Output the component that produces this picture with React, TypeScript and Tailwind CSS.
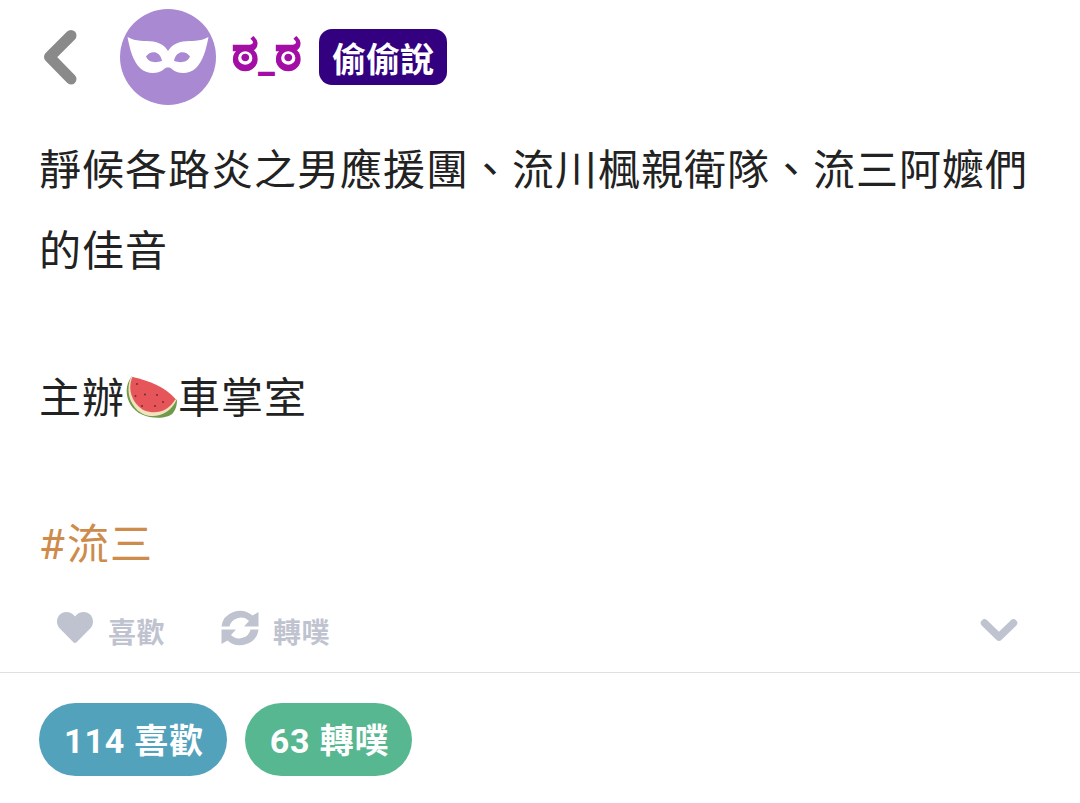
const ARROW = "M221.500 626 A18.500 17.500 0 0 1 252.500 615 L258.500 611.500 V626 H244 L249 620.500 A11.500 11 0 0 0 229.500 626 Z";

const cjk = "font-['Roboto','Noto_Sans_CJK_TC',sans-serif]";

const BackIcon = () => (
  <svg className="h-[56px] w-[34px] shrink-0" viewBox="43 29 34 56" fill="none" stroke="#8a8a8a" strokeWidth="11" strokeLinecap="round" strokeLinejoin="round">
    <path d="M71 35.500 49.500 57 71 79" />
  </svg>
);

const MaskAvatar = () => (
  <div className="ml-[43px] size-24 shrink-0 overflow-hidden rounded-full bg-[#a989d1]">
    <svg className="size-full" viewBox="120 9 96 96">
      <path
        fill="#fff"
        fillRule="evenodd"
        d="M127.500 37 C136 42 145 40.500 153 41.500 C160 42.500 165 46 168 51 C171 46 176 42.500 183 41.500 C191 40.500 200 42 208.500 37 C206 50 203 61 196 68 C190 74 179 74.500 173 70 C171 68 170 67.500 168 67.500 C166 67.500 165 68 163 70 C157 74.500 146 74 140 68 C133 61 130 50 127.500 37 Z M146 56.500 C150 50.500 160 50 162 61 C156 63 149 63 146 56.500 Z M190 56.500 C186 50.500 176 50 174 61 C180 63 187 63 190 56.500 Z"
      />
    </svg>
  </div>
);

const Watermelon = () => (
  <svg className="h-[54px] w-[53px] shrink-0" viewBox="125 370 53 54">
    <path d="M131.500 377.500 C122 390 127 409 142 415.500 C152 420 168 420 173 414 C176 410 177 406 177 401 Z" fill="#6f9a4b" />
    <path d="M131.500 377.500 C124.500 391 130 409 144 415.500 C156 420 170 415 176.500 401 Z" fill="#f1e3bd" />
    <path d="M132.500 378 C127 390 132 405 144.500 411.500 C156 416 169 412 175.500 400 C165 388 150 382 132.500 378 Z" fill="#e6555a" />
    <g fill="#7c2a2b">
      <circle cx="137" cy="385" r="1" />
      <circle cx="135.500" cy="397" r="1" />
      <circle cx="145" cy="395.500" r="1" />
      <circle cx="157" cy="396" r="1" />
      <circle cx="142" cy="407" r="1" />
      <circle cx="155" cy="407" r="1" />
      <circle cx="163" cy="403" r="1" />
    </g>
  </svg>
);

const HeartIcon = () => (
  <svg className="h-[31px] w-9" viewBox="0 32 512 448" preserveAspectRatio="none" fill="currentColor">
    <path d="M462.3 62.600C407.500 15.900 326 24.300 275.700 76.200L256 96.500l-19.700-20.300C186.100 24.300 104.500 15.900 49.700 62.600c-62.800 53.600-66.100 149.800-9.900 207.900l193.500 199.800c12.500 12.900 32.800 12.900 45.300 0l193.500-199.800c56.300-58.100 53-154.300-9.800-207.900z" />
  </svg>
);

const RefreshIcon = () => (
  <svg className="h-[36px] w-[38px]" viewBox="221 609.500 38 36" fill="currentColor">
    <path d={ARROW} />
    <path d={ARROW} transform="rotate(180 240 627.500)" />
  </svg>
);

const App = () => {
  return (
    <main className={`h-[803px] w-[1080px] overflow-hidden bg-white text-[#222] ${cjk}`}>
      <header className="flex h-[114px] items-center pl-[43px]">
        <BackIcon />
        <MaskAvatar />
        <span className="mb-2 ml-4 flex h-[70px] w-[71px] items-baseline whitespace-nowrap text-[50px] font-bold leading-[70px] text-[#a30fa5] [-webkit-text-stroke:1px_#a30fa5]">
          ಠ<span className="translate-y-0.5 text-[38px] [-webkit-text-stroke:0]">_</span>ಠ
        </span>
        <span className="ml-4 flex h-14 w-32 items-center justify-center rounded-[13px] bg-[#330080] pt-1.5 text-[34px] font-bold text-white">偷偷說</span>
      </header>

      <article className="h-[477px] pl-[39px] pt-[17px] text-[42px] tracking-[1px]">
        <p className="h-[81px] whitespace-nowrap leading-[80px]">靜候各路炎之男應援團、流川楓親衛隊、流三阿嬤們</p>
        <p className="h-[80px] leading-[80px]">的佳音</p>
        <p className="mt-[67px] flex h-[80px] items-center leading-[80px]">
          主辦
          <span className="-mt-1.5"><Watermelon /></span>
          車掌室
        </p>
        <p className="mt-[66px] h-[80px] leading-[80px] text-[#cd8b4c]"><span className="mr-px">#</span>流三</p>
      </article>

      <div className="flex h-[82px] items-center border-b border-[#e0e0e0] pl-[57px] pr-[62px] text-[28px] font-bold tracking-[0.5px] text-[#bfc3cf]">
        <span className="mb-2"><HeartIcon /></span>
        <span className="ml-[15px] w-[58px] pt-1">喜歡</span>
        <span className="ml-[55px] mb-2"><RefreshIcon /></span>
        <span className="ml-[14px] pt-1">轉噗</span>
        <svg className="mb-1 ml-auto h-[24px] w-[38px]" viewBox="980 618 38 24" fill="none" stroke="currentColor" strokeWidth="7.5" strokeLinecap="round" strokeLinejoin="round">
          <path d="M984.500 623 999 637 1013.500 623" />
        </svg>
      </div>

      <footer className="flex gap-[18px] pl-[39px] pt-[30px] text-[34px] font-bold tracking-[0.8px] text-white">
        <span className="flex h-[73px] w-[188px] items-center justify-center rounded-full bg-[#53a2bc] pl-0.5 pt-1">114 喜歡</span>
        <span className="flex h-[73px] w-[167px] items-center justify-center rounded-full bg-[#57b791] pl-0.5 pt-1">63 轉噗</span>
      </footer>
    </main>
  );
};

export default App;
